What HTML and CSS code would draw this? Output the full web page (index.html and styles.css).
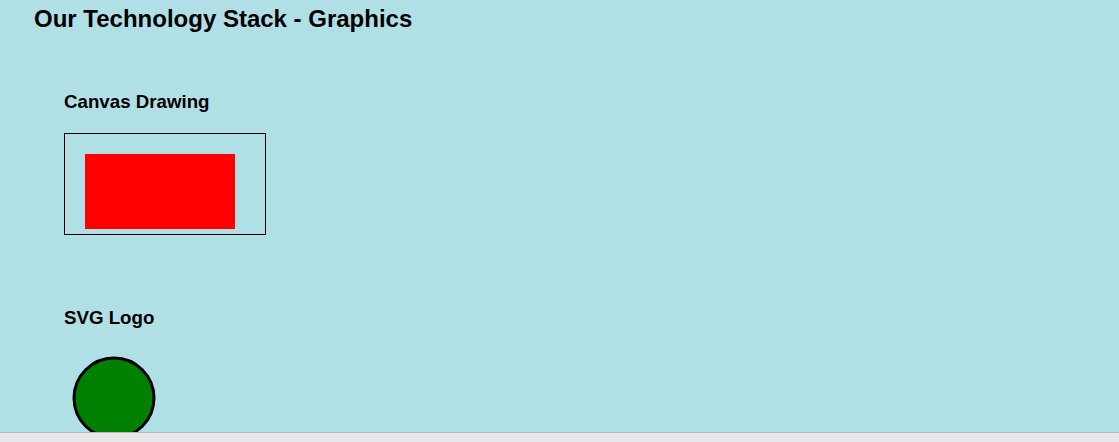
FILE: index.html
```html
<!DOCTYPE html>
<html lang="en">
<head>
<meta charset="utf-8">
<title>Our Technology Stack - Graphics</title>
<link rel="stylesheet" href="styles.css">
</head>
<body>
<header class="page-header">
  <h2 class="page-title">Our Technology Stack - Graphics</h2>
</header>
<main class="content">
  <section class="demo demo-canvas">
    <h3 class="demo-title">Canvas Drawing</h3>
    <div class="canvas-box"><div class="canvas-rect"></div></div>
  </section>
  <section class="demo demo-svg">
    <h3 class="demo-title">SVG Logo</h3>
    <svg class="logo" width="100" height="100" viewBox="0 0 100 100">
      <circle cx="50" cy="50" r="40" stroke="#000" stroke-width="3" fill="green"/>
    </svg>
  </section>
</main>
<div class="bottom-bar"></div>
</body>
</html>
```
FILE: styles.css
```css
html, body {
  margin: 0;
  padding: 0;
}
body {
  background: #b0e0e6;
  font-family: "Liberation Sans", Arial, sans-serif;
  color: #000;
  padding: 5px 34px 0;
  overflow: hidden;
  height: 442px;
  box-sizing: border-box;
}
.page-title {
  margin: 0;
  font-size: 24px;
  line-height: 27px;
  font-weight: bold;
}
.content {
  padding-left: 30px;
}
.demo-canvas {
  margin-top: 59px;
}
.demo-svg {
  margin-top: 72px;
}
.demo-title {
  margin: 0 0 20px;
  font-size: 18.72px;
  line-height: 22px;
  font-weight: bold;
}
.demo-svg .demo-title {
  margin-bottom: 19px;
}
.canvas-box {
  border: 1px solid #000;
  padding: 20px 0 0 20px;
  box-sizing: content-box;
  width: 180px;
  height: 80px;
}
.canvas-rect {
  width: 150px;
  height: 75px;
  background: #ff0000;
}
.logo {
  display: block;
}
.bottom-bar {
  position: fixed;
  left: 0;
  right: 0;
  bottom: 0;
  height: 9px;
  border-top: 1px solid #b8b8b8;
  background: #e8e8ea;
}
```
